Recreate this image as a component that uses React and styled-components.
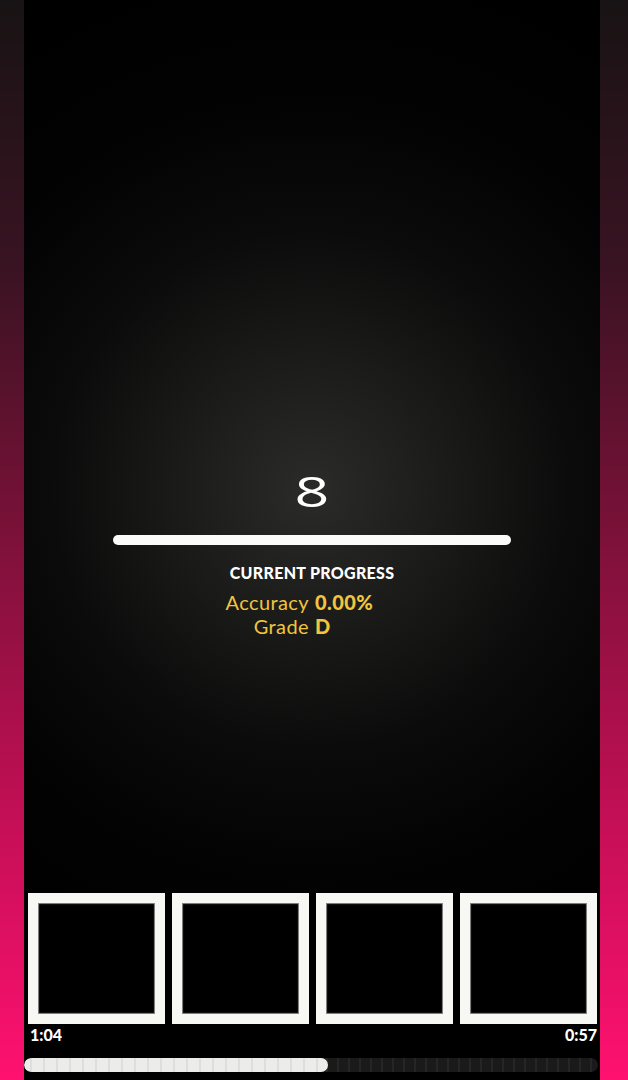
import styled, { createGlobalStyle } from "styled-components";

const GlobalStyle = createGlobalStyle`
  html, body {
    margin: 0;
    padding: 0;
    background: #000;
  }
  body {
    font-family: "Lato", "Noto Sans", sans-serif;
  }
`;

const Screen = styled.div`
  display: flex;
  width: 628px;
  height: 1080px;
  background: linear-gradient(180deg, #181314 0%, #3a1322 25%, #7d1139 50%, #c20f55 75%, #ff1170 100%);
  overflow: hidden;
`;

const Gutter = styled.div`
  width: ${(p) => p.$w}px;
  flex-shrink: 0;
`;

const Main = styled.div`
  width: 576px;
  display: flex;
  flex-direction: column;
  background: #000;
`;

const Stage = styled.div`
  flex: 1;
  display: flex;
  flex-direction: column;
  align-items: center;
  padding-top: 466px;
  background: radial-gradient(
    circle at 50% 490px,
    #2b2b29 0px,
    #1a1a19 140px,
    #0b0b0b 260px,
    #030303 380px,
    #000 520px
  );
`;

const Combo = styled.div`
  color: #fff;
  font-family: "Open Sans", sans-serif;
  font-weight: 400;
  font-size: 42px;
  line-height: 50px;
  transform: scaleX(1.45);
`;

const Bar = styled.div`
  width: 398px;
  height: 10px;
  margin-top: 19px;
  border-radius: 5px;
  background: #fbfbfa;
`;

const Heading = styled.div`
  margin-top: 18px;
  color: #fff;
  font-weight: 900;
  font-size: 16px;
  letter-spacing: 0.3px;
`;

const Stats = styled.div`
  width: 100%;
  display: grid;
  grid-template-columns: 1fr 1fr;
  column-gap: 6px;
  margin-top: 8px;
  color: #f2c43f;
  font-size: 20px;
  line-height: 24px;
  letter-spacing: 0.4px;
`;

const Label = styled.span`
  text-align: right;
`;

const Value = styled.span`
  font-weight: 900;
`;

const Lanes = styled.div`
  display: grid;
  grid-template-columns: repeat(4, 137px);
  column-gap: 7px;
  padding-left: 4px;
`;

const Lane = styled.div`
  height: 131px;
  box-sizing: border-box;
  border: 10px solid #f7f7f3;
  background: #000;
  box-shadow: inset 0 0 1px 1px #8a8a88;
`;

const Times = styled.div`
  display: flex;
  justify-content: space-between;
  padding: 1px 3px 0 6px;
  height: 24px;
  color: #fff;
  font-weight: 900;
  font-size: 16px;
  line-height: 20px;
`;

const Track = styled.div`
  height: 14px;
  margin: 9px 2px 8px 0;
  border-radius: 7px;
  overflow: hidden;
  background:
    repeating-linear-gradient(90deg, transparent 0 5px, rgba(255,255,255,0.05) 5px 7px, transparent 7px 11px),
    #1a1a1a;
`;

const Fill = styled.div`
  height: 100%;
  border-radius: 7px;
  background:
    repeating-linear-gradient(90deg, rgba(0,0,0,0) 0 6px, rgba(0,0,0,0.06) 6px 8px, rgba(0,0,0,0) 8px 13px),
    #ececea;
`;

const progress = 304 / 574;

export default function App() {
  return (
    <Screen>
      <GlobalStyle />
      <Gutter $w={24} />
      <Main>
        <Stage>
          <Combo>8</Combo>
          <Bar />
          <Heading>CURRENT PROGRESS</Heading>
          <Stats>
            <Label>Accuracy</Label>
            <Value>0.00%</Value>
            <Label>Grade</Label>
            <Value>D</Value>
          </Stats>
        </Stage>
        <Lanes>
          <Lane />
          <Lane />
          <Lane />
          <Lane />
        </Lanes>
        <Times>
          <span>1:04</span>
          <span>0:57</span>
        </Times>
        <Track>
          <Fill style={{ width: `${progress * 100}%` }} />
        </Track>
      </Main>
      <Gutter $w={28} />
    </Screen>
  );
}
